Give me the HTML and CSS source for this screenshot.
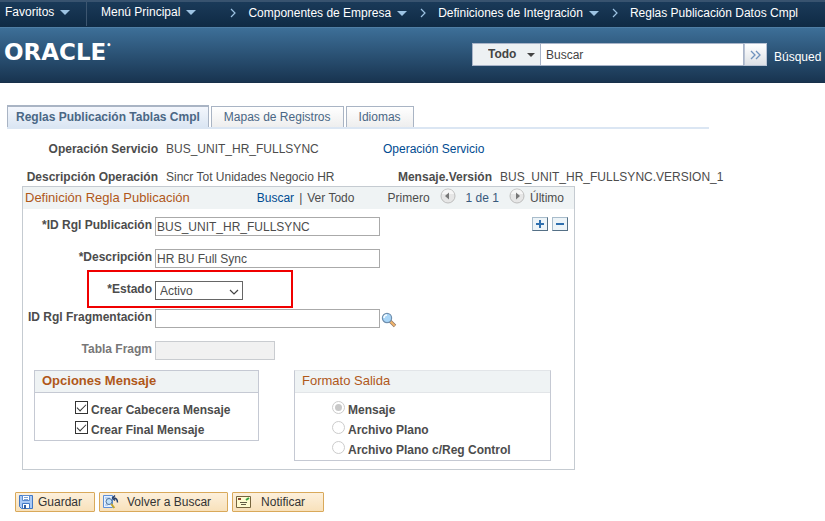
FILE: index.html
```html
<!DOCTYPE html>
<html lang="es">
<head>
<meta charset="utf-8">
<title>Reglas Publicación Datos Cmpl</title>
<link rel="stylesheet" href="styles.css">
</head>
<body>
<header>
  <nav class="topnav">
    <a class="fav" href="#">Favoritos<i class="tri"></i></a>
    <a class="menu" href="#">Menú Principal<i class="tri"></i></a>
    <ol class="crumbs">
      <li><svg class="sep" viewBox="0 0 6 10"><path d="M1 1l4 4-4 4"/></svg><a href="#">Componentes de Empresa<i class="tri"></i></a></li>
      <li><svg class="sep" viewBox="0 0 6 10"><path d="M1 1l4 4-4 4"/></svg><a href="#">Definiciones de Integración<i class="tri"></i></a></li>
      <li><svg class="sep" viewBox="0 0 6 10"><path d="M1 1l4 4-4 4"/></svg><a href="#">Reglas Publicación Datos Cmpl</a></li>
    </ol>
  </nav>
  <div class="brand">
    <div class="logo">ORACLE<span class="reg">•</span></div>
    <form class="search">
      <div class="scope">
        <select aria-label="Ámbito"><option>Todo</option></select>
        <i class="tri dark"></i>
      </div>
      <input type="text" value="Buscar" aria-label="Texto de búsqueda">
      <button type="button" aria-label="Ir"><svg width="12" height="10" viewBox="0 0 12 10"><path d="M1 1l4 4-4 4M6 1l4 4-4 4" fill="none" stroke="#6f92bd" stroke-width="1.3"/></svg></button>
      <a href="#">Búsqued</a>
    </form>
  </div>
</header>

<main>
  <nav class="tabs">
    <a class="active" href="#">Reglas Publicación Tablas Cmpl</a>
    <a href="#">Mapas de Registros</a>
    <a href="#">Idiomas</a>
  </nav>

  <div class="info">
    <b>Operación Servicio</b><span>BUS_UNIT_HR_FULLSYNC</span>
    <a href="#">Operación Servicio</a>
  </div>
  <div class="info second">
    <b>Descripción Operación</b><span>Sincr Tot Unidades Negocio HR</span>
    <b class="version">Mensaje.Versión</b><span>BUS_UNIT_HR_FULLSYNC.VERSION_1</span>
  </div>

  <section class="rule">
    <div class="rulehead">
      <h2>Definición Regla Publicación</h2>
      <div class="find"><a href="#">Buscar</a><span>|</span><span>Ver Todo</span></div>
      <div class="pager">
        <span>Primero</span>
        <button type="button" aria-label="Anterior"><svg width="16" height="16" viewBox="0 0 16 16"><circle cx="8" cy="8" r="7" fill="#e6e6e6" stroke="#bdbdbd"/><path d="M2 6a6.300 6.300 0 0 1 12 0z" fill="#f6f6f6"/><path d="M9 4.500v7L5 8z" fill="#777"/></svg></button>
        <span class="count">1 de 1</span>
        <button type="button" aria-label="Siguiente"><svg width="16" height="16" viewBox="0 0 16 16"><circle cx="8" cy="8" r="7" fill="#e6e6e6" stroke="#bdbdbd"/><path d="M2 6a6.300 6.300 0 0 1 12 0z" fill="#f6f6f6"/><path d="M7 4.500v7L11 8z" fill="#777"/></svg></button>
        <span>Último</span>
      </div>
    </div>

    <form class="fields">
      <div class="row">
        <label for="id">*ID Rgl Publicación</label><input id="id" type="text" value="BUS_UNIT_HR_FULLSYNC">
        <div class="addrem">
          <button type="button" aria-label="Añadir"><svg width="14" height="12" viewBox="0 0 14 12"><path d="M3 6h8M7 2v8" stroke="#2f6fae" stroke-width="2"/></svg></button>
          <button type="button" aria-label="Eliminar"><svg width="14" height="12" viewBox="0 0 14 12"><path d="M3 6h8" stroke="#2f6fae" stroke-width="2"/></svg></button>
        </div>
      </div>
      <div class="row"><label for="desc">*Descripción</label><input id="desc" type="text" value="HR BU Full Sync"></div>
      <div class="row marked">
        <label for="estado">*Estado</label>
        <div class="pick"><select id="estado"><option>Activo</option></select><svg width="10" height="6" viewBox="0 0 10 6"><path d="M1 1l4 4 4-4" fill="none" stroke="#444" stroke-width="1.200"/></svg></div>
      </div>
      <div class="row"><label for="frag">ID Rgl Fragmentación</label><input id="frag" type="text">
        <button class="lookup" type="button" aria-label="Consultar"><svg width="16" height="16" viewBox="0 0 16 16"><path d="M9 9l5 5" stroke="#8d7768" stroke-width="3.400"/><path d="M9.500 9.500l4.200 4.200" stroke="#f2b56b" stroke-width="2"/><circle cx="6" cy="6" r="4.600" fill="#a9d6f8" stroke="#6f8fae" stroke-width="1.200"/><path d="M3 6a3 3 0 0 1 3-3" fill="none" stroke="#f3fbff" stroke-width="1.600"/></svg></button>
      </div>
      <div class="row off"><label for="tabla">Tabla Fragm</label><input id="tabla" type="text" disabled></div>

      <div class="groups">
        <fieldset class="opts" aria-labelledby="g1">
          <h3 id="g1">Opciones Mensaje</h3>
          <div class="choices">
            <label><input type="checkbox" checked>Crear Cabecera Mensaje</label>
            <label><input type="checkbox" checked>Crear Final Mensaje</label>
          </div>
        </fieldset>
        <fieldset class="fmt" aria-labelledby="g2">
          <h3 id="g2">Formato Salida</h3>
          <div class="choices">
            <label><input type="radio" name="f" checked disabled>Mensaje</label>
            <label><input type="radio" name="f" disabled>Archivo Plano</label>
            <label><input type="radio" name="f" disabled>Archivo Plano c/Reg Control</label>
          </div>
        </fieldset>
      </div>
    </form>
  </section>

  <div class="actions">
    <button type="button"><svg width="14" height="14" viewBox="0 0 14 14"><path d="M.5.5h13v13h-11l-2-2z" fill="#a9c9f5" stroke="#4177c4"/><path d="M3.500.5h7v5h-7z" fill="#fff" stroke="#5b8bd0"/><path d="M5 2.500h4M5 4.500h4" stroke="#7fa3d6"/><path d="M3.500 8.500h7v5h-7z" fill="#fff" stroke="#4177c4"/><path d="M5 10h2v4H5z" fill="#345f9f"/></svg>Guardar</button>
    <button type="button" class="wide"><svg width="16" height="14" viewBox="0 0 16 14"><path d="M.5.5h9v12h-9z" fill="#e5f1ff" stroke="#5d8fd8"/><path d="M2 3h5M2 10h3" stroke="#8db3e8"/><circle cx="6" cy="6.500" r="3" fill="#bfe0fa" stroke="#4d6f98"/><path d="M8.300 9l3 4" stroke="#c3a52c" stroke-width="2"/><path d="M14.500 7.500c0-3-1-4.500-4-4.500M12 .5L9.500 3 12 5.500" fill="none" stroke="#263f6b" stroke-width="1.400"/></svg>Volver a Buscar</button>
    <button type="button" class="wide"><svg width="15" height="12" viewBox="0 0 15 12"><path d="M.5.5h14v11H.5z" fill="#fffbd0" stroke="#76653e"/><path d="M2 3h3" stroke="#8c4932" stroke-width="2"/><path d="M10 4l3-2" stroke="#34a044" stroke-width="2"/><path d="M4 6.500h7M5 8.500h5" stroke="#625c45"/></svg>Notificar</button>
  </div>
</main>
</body>
</html>
```
FILE: styles.css
```css
*, *::after { box-sizing: border-box; }
body {
  margin: 0;
  background: #fff;
  color: #4c4c4c;
  font: 12px/16px "Liberation Sans", Arial, sans-serif;
  overflow-x: hidden;
}
a { color: #004b91; text-decoration: none; }
input, select, button { font: inherit; color: inherit; margin: 0; border-radius: 0; }
button { padding: 0; }
svg { display: block; flex: none; }

/* Header */
.topnav {
  display: flex;
  align-items: flex-start;
  height: 27px;
  border-top: 2px solid #38536f;
  background: linear-gradient(#1a3a59, #0f2a44);
  white-space: nowrap;
}
.topnav a { display: flex; align-items: center; gap: 6px; color: #fff; }
.fav { width: 87px; height: 24px; padding: 0 0 4px 5px; border-right: 1px solid #3d5670; }
.menu { padding: 0 0 4px 14px; height: 24px; }
.tri { border: 5px solid transparent; border-top-color: #9dc3e3; border-bottom: 0; }
.tri.dark { border-width: 4px; border-bottom: 0; border-top-color: #444; }
.crumbs { display: flex; list-style: none; margin: 0 0 0 34px; padding: 3px 0 0; gap: 13px; }
.crumbs li { display: flex; align-items: center; gap: 12px; }
.sep { width: 6px; height: 10px; fill: none; stroke: #9dc3e3; stroke-width: 1.2; }
.brand {
  display: flex;
  align-items: flex-start;
  justify-content: space-between;
  height: 56px;
  border-top: 1px solid #4f7ea5;
  border-bottom: 1px solid #17304a;
  background: linear-gradient(#3d6f98, #183450);
}
.logo { display: flex; padding: 12px 0 0 4px; color: #fff; font: bold 23px/24px "DejaVu Sans", sans-serif; }
.reg { font-size: 8px; line-height: 12px; }
.search { display: flex; align-items: center; margin-top: 15px; color: #444; }
.scope { position: relative; }
.scope select { width: 69px; height: 23px; padding: 0 0 2px 15px; border: 1px solid #a9b4c8; background: #edf1f3; font-weight: bold; appearance: none; }
.scope .tri { position: absolute; right: 6px; top: 10px; }
.search input { width: 203px; height: 23px; padding: 0 5px; border: 1px solid #a9b4c8; border-left: 0; background: #fff; }
.search button { display: grid; place-items: center; width: 23px; height: 23px; border: 1px solid #b9c3d4; background: linear-gradient(#fff, #dde1e6); }
.search a { width: 51px; margin-left: 7px; padding-top: 4px; color: #fff; }

/* Tabs */
main { padding: 22px 7px 0; }
.tabs { display: flex; align-items: flex-end; gap: 2px; max-width: 702px; border-bottom: 2px solid #dbe6f3; }
.tabs a {
  padding: 2px 12px;
  border: 1px solid #a9b4c4;
  border-bottom: 0;
  background: linear-gradient(#fff, #eee);
  color: #4a6785;
}
.tabs .active { padding: 2px 8px; border-top-width: 2px; background: linear-gradient(#f3f6fc, #dbe6f3); font-weight: bold; }

/* Summary lines */
.info { display: flex; gap: 8px; margin-top: 12px; white-space: nowrap; }
.info b { width: 151px; text-align: right; }
.info span { min-width: 209px; }
.info .version { width: 117px; margin-left: -8px; }

/* Rule box */
.rule { max-width: 553px; margin: 1px 0 0 15px; border: 1px solid #c5cbd1; }
.rulehead { display: flex; align-items: center; height: 22px; padding: 0 10px 0 2px; background: #eff3f4; white-space: nowrap; }
h2, h3 { margin: 0; color: #b0581a; font-size: 13px; font-weight: normal; }
.find { display: flex; gap: 5px; margin-left: 67px; }
.pager { display: flex; align-items: center; flex: 1; justify-content: flex-end; gap: 10px; }
.pager button { height: 20px; padding-bottom: 4px; border: 0; background: none; }
.pager button + span:last-child { margin-left: -5px; }
.count { color: #38597c; }
.fields { padding: 8px 6px 8px 0; }
.row { display: flex; position: relative; margin-bottom: 13px; }
.row label { width: 129px; margin-right: 3px; text-align: right; font-weight: bold; white-space: nowrap; }
.row input { width: 225px; height: 19px; padding: 0 1px; border: 1px solid #aaa; background: #fff; }
.row.off label { color: #777; }
.row.off input { width: 120px; border-color: #c9ccd0; background: #f1f1f1; }
.row.marked { margin-bottom: 9px; }
.marked::after {
  content: "";
  position: absolute;
  left: 64px;
  top: -11px;
  width: 206px;
  height: 38px;
  border: 2px solid #f00000;
  pointer-events: none;
}
.pick { position: relative; }
.pick select { width: 88px; height: 19px; padding: 0 4px; border: 1px solid #666; background: #fff; appearance: none; }
.pick svg { position: absolute; right: 4px; top: 8px; }
.lookup { padding: 3px 0 0 1px; border: 0; background: none; height: 19px; }
.addrem { display: flex; gap: 4px; margin-left: auto; }
.addrem button { width: 16px; height: 14px; border: 1px solid #a8bccb; border-right-color: #557086; border-bottom-color: #557086; background: #edf4f8; }

/* Option groups */
.groups { display: flex; align-items: flex-start; gap: 35px; margin: -3px 0 0 11px; }
fieldset { margin: 0; padding: 0; border: 1px solid #c5c9d3; min-width: 0; }
.opts { width: 225px; }
.fmt { width: 257px; border-top-color: #e2e5e8; }
h3 { height: 22px; padding: 2px 7px; border-bottom: 1px solid #c5c9d3; background: #eff3f4; }
.opts h3 { font-weight: bold; }
.fmt h3 { border-bottom-color: #e2e5e8; }
.choices { padding: 7px 0 0 40px; }
.fmt .choices { padding-left: 37px; }
.choices label { display: flex; gap: 3px; height: 20px; padding-top: 2px; font-weight: bold; }
.choices input { appearance: none; flex: none; position: relative; width: 13px; height: 13px; margin-top: -1px; border: 1px solid #333; background: #fff; }
.choices input[type="checkbox"]:checked::after {
  content: "";
  position: absolute;
  left: 3px;
  top: 0;
  width: 5px;
  height: 9px;
  border: solid #333;
  border-width: 0 1px 1px 0;
  transform: rotate(45deg);
}
.choices input[type="radio"] { border-color: #ccc; border-radius: 50%; }
.choices input[type="radio"]:checked::after { content: ""; position: absolute; inset: 2px; border-radius: 50%; background: #c8c8c8; }

/* Page actions */
.actions { display: flex; gap: 4px; margin: 22px 0 0 8px; }
.actions button {
  display: flex;
  align-items: center;
  gap: 5px;
  height: 20px;
  padding: 0 12px 0 3px;
  border: 1px solid #d9a95a;
  border-radius: 1px;
  background: linear-gradient(#fdf0dc, #f8e1bb);
  color: #333;
}
.actions .wide { gap: 8px; padding-right: 16px; }
.actions .wide:last-child { gap: 10px; padding-right: 18px; }
```
